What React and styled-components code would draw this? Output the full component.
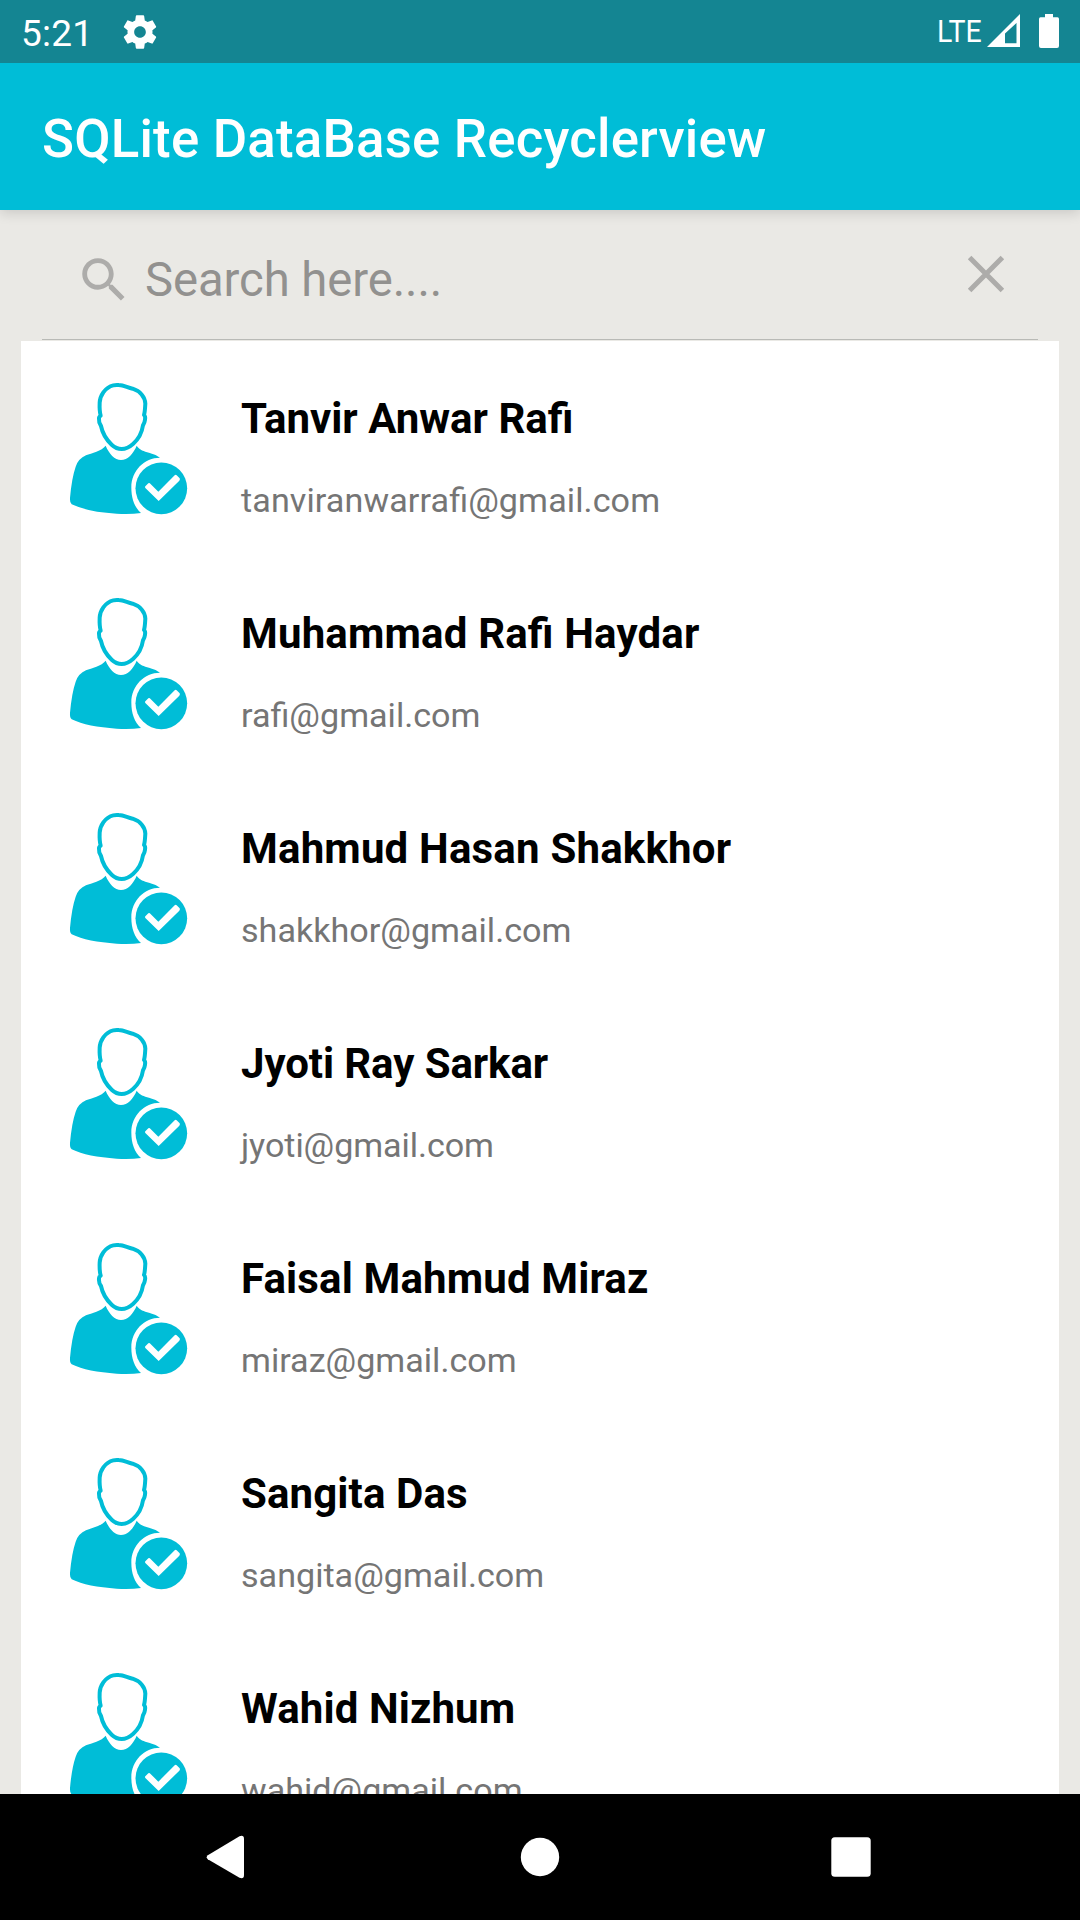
import React from "react";
import styled, { createGlobalStyle } from "styled-components";

const GlobalStyle = createGlobalStyle`
  * { box-sizing: border-box; }
  body { margin: 0; font-family: Roboto, "Liberation Sans", sans-serif; }
`;

const Screen = styled.div`
  display: flex;
  flex-direction: column;
  width: 1080px;
  height: 1920px;
  overflow: hidden;
  background: #eae9e5;
`;

const StatusBar = styled.header`
  position: relative;
  z-index: 1;
  display: flex;
  flex: none;
  justify-content: space-between;
  height: 63px;
  padding: 0 21px;
  background: #148592;
  color: #fff;
`;

const StatusGroup = styled.div`
  display: flex;
  align-items: flex-start;
`;

const Clock = styled.span`
  width: 99px;
  padding-top: 12px;
  font-size: 37px;
  letter-spacing: 0.2px;
  line-height: 43px;
`;

const Network = styled.span`
  width: 50px;
  padding-top: 11px;
  font-size: 32px;
  line-height: 40px;
  transform: scaleX(0.89);
  transform-origin: left;
`;

const Icon = styled.svg`
  display: block;
  flex: none;
  width: ${(p) => p.$w}px;
  height: ${(p) => p.$h}px;
  margin-top: ${(p) => p.$top || 0}px;
  margin-left: ${(p) => p.$left || 0}px;
`;

const Toolbar = styled.div`
  display: flex;
  flex: none;
  align-items: center;
  height: 147px;
  padding: 5px 42px 0;
  background: #00bdd7;
  box-shadow: 0 3px 12px rgba(0, 0, 0, 0.14);
`;

const Title = styled.h1`
  margin: 0;
  color: #fff;
  font-size: 52.8px;
  font-weight: 500;
  letter-spacing: 0.2px;
  line-height: 62px;
  white-space: nowrap;
`;

const SearchBar = styled.div`
  display: flex;
  flex: none;
  height: 130px;
  margin: 0 42px 1px;
  padding: 41px 33px 0 33px;
  border-bottom: 1px solid #b9bab6;
`;

const Hint = styled.span`
  flex: 1;
  margin-left: 12px;
  color: #92918f;
  font-size: 47.25px;
  letter-spacing: -0.08px;
  line-height: 58px;
`;

const List = styled.main`
  flex: 1;
  min-height: 0;
  margin: 0 21px;
  overflow: hidden;
  background: #fff;
`;

const Row = styled.article`
  display: flex;
  height: 215px;
  padding-left: 39px;
`;

const Details = styled.div`
  display: flex;
  flex-direction: column;
  gap: 36px;
  margin-left: 41px;
  padding-top: 53px;
  font-feature-settings: "liga" 1;
  white-space: nowrap;
`;

const Name = styled.strong`
  color: #000;
  font-size: 42px;
  font-weight: 700;
  letter-spacing: ${(p) => p.$tracking || 0}px;
  line-height: 50px;
`;

const Email = styled.span`
  color: #757575;
  font-size: 34.125px;
  letter-spacing: ${(p) => p.$tracking || 0}px;
  line-height: 40px;
`;

const NavBar = styled.nav`
  display: flex;
  flex: none;
  height: 126px;
  padding: 41px 0 0 206px;
  background: #000;
`;

const GearIcon = () => (
  <Icon $w={40} $h={40} $top={12} viewBox="0 0 24 24" fill="#fff">
    <path d="M19.43 12.98c.04-.32.07-.64.07-.98s-.03-.66-.07-.98l2.11-1.65c.19-.15.24-.42.12-.64l-2-3.46c-.12-.22-.39-.3-.61-.22l-2.49 1c-.52-.4-1.08-.73-1.69-.98l-.38-2.65C14.46 2.18 14.25 2 14 2h-4c-.25 0-.46.18-.49.42l-.38 2.65c-.61.25-1.17.59-1.69.98l-2.49-1c-.23-.09-.49 0-.61.22l-2 3.46c-.13.22-.07.49.12.64l2.11 1.65c-.04.32-.07.65-.07.98s.03.66.07.98l-2.11 1.65c-.19.15-.24.42-.12.64l2 3.46c.12.22.39.3.61.22l2.49-1c.52.4 1.08.73 1.69.98l.38 2.65c.03.24.24.42.49.42h4c.25 0 .46-.18.49-.42l.38-2.65c.61-.25 1.17-.59 1.69-.98l2.49 1c.23.09.49 0 .61-.22l2-3.46c.12-.22.07-.49-.12-.64l-2.11-1.65zM12 15.5c-1.93 0-3.5-1.57-3.5-3.5s1.57-3.5 3.5-3.5 3.5 1.57 3.5 3.5-1.57 3.5-3.5 3.5z" />
  </Icon>
);

const SignalIcon = () => (
  <Icon $w={33} $h={33} $top={14} viewBox="0 0 33 33" fill="#fff">
    <path fillRule="evenodd" d="M0 33 33 0V33ZM18 29.3H29.5V9L18 19.5Z" />
  </Icon>
);

const BatteryIcon = () => (
  <Icon $w={20} $h={34} $top={14} $left={19} viewBox="0 0 20 34" fill="#fff">
    <path d="M6 0H14V3.3H18.5Q20 3.3 20 5V32Q20 34 18 34H2Q0 34 0 32V5Q0 3.3 1.5 3.3H6Z" />
  </Icon>
);

const SearchIcon = () => (
  <Icon $w={58} $h={58} viewBox="0 0 24 24" fill="#adacaa">
    <path d="M15.5 14h-.79l-.28-.27C15.41 12.59 16 11.11 16 9.5 16 5.91 13.09 3 9.5 3S3 5.91 3 9.5 5.91 16 9.5 16c1.61 0 3.09-.59 4.23-1.57l.27.28v.79l5 4.99L20.49 19l-4.99-5zm-6 0C7.01 14 5 11.99 5 9.5S7.01 5 9.5 5 14 7.01 14 9.5 11.99 14 9.5 14z" />
  </Icon>
);

const ClearIcon = () => (
  <Icon $w={38} $h={38} $top={4} viewBox="0 0 38 38" stroke="#adacaa" strokeWidth="5">
    <path d="M2.6 2.6 35.4 35.4M35.4 2.6 2.6 35.4" />
  </Icon>
);

const UserIcon = () => (
  <Icon $w={140} $h={150} $top={29} viewBox="0 0 420 450">
    <path
      fill="#00bdd7"
      d="M137 227C147 251 164 270 183 270C203 270 220 251 230 227C239 240 252 244 267 248Q287 253 300 263C253 263 214 302 214 352C214 387 224 412 243 429Q213 433 170 431Q83 426 35 403Q29 398 30 384Q35 325 47 290Q55 266 78 256C95 249 125 243 137 227Z"
    />
    <path
      fill="#fff"
      stroke="#00bdd7"
      strokeWidth="12"
      strokeLinejoin="round"
      d="M176 45C193 46 202 53 218 56C240 63 255 81 256 101C255 115 255 126 252 135Q257 139 255 149Q254 158 249 166C246 187 234 209 219 222Q202 237 185 237Q169 237 155 224C138 208 127 188 123 168Q116 158 117 147Q116 140 122 137Q118 123 119 98C120 77 135 52 160 46Q168 44 176 45Z"
    />
    <circle cx="304" cy="355" r="77.5" fill="#00bdd7" />
    <path fill="#fff" d="M256 349 265 340Q268 338 271 341L295 365 344 316Q347 313 350 316L359 325Q361 328 358 332L296 393 256 354Q254 351 256 349Z" />
  </Icon>
);

const BackIcon = () => (
  <Icon $w={38} $h={44} viewBox="0 0 38 44" fill="#fff">
    <path d="M1.8 20.2 33.5 1.2Q38 -.4 38 4V40Q38 44.4 33.5 42.8L1.8 24.2Q-.4 22.2 1.8 20.2Z" />
  </Icon>
);

const HomeIcon = () => (
  <Icon $w={40} $h={40} $top={2} $left={276} viewBox="0 0 40 40" fill="#fff">
    <circle cx="20" cy="20" r="19.2" />
  </Icon>
);

const RecentsIcon = () => (
  <Icon $w={40} $h={40} $top={2} $left={271} viewBox="0 0 40 40" fill="#fff">
    <rect x=".3" y=".3" width="39.4" height="39.4" rx="3.5" />
  </Icon>
);

const contacts = [
  { name: "Tanvir Anwar Rafi", email: "tanviranwarrafi@gmail.com", emailTracking: 0.1 },
  { name: "Muhammad Rafi Haydar", email: "rafi@gmail.com", nameTracking: 0.17 },
  { name: "Mahmud Hasan Shakkhor", email: "shakkhor@gmail.com", nameTracking: 0.19 },
  { name: "Jyoti Ray Sarkar", email: "jyoti@gmail.com", nameTracking: -0.08, emailTracking: -0.07 },
  { name: "Faisal Mahmud Miraz", email: "miraz@gmail.com", nameTracking: 0.14 },
  { name: "Sangita Das", email: "sangita@gmail.com", nameTracking: 0.12 },
  { name: "Wahid Nizhum", email: "wahid@gmail.com", nameTracking: 0.12 },
];

export default function App() {
  return (
    <>
      <GlobalStyle />
      <Screen>
        <StatusBar>
          <StatusGroup>
            <Clock>5:21</Clock>
            <GearIcon />
          </StatusGroup>
          <StatusGroup>
            <Network>LTE</Network>
            <SignalIcon />
            <BatteryIcon />
          </StatusGroup>
        </StatusBar>
        <Toolbar>
          <Title>SQLite DataBase Recyclerview</Title>
        </Toolbar>
        <SearchBar>
          <SearchIcon />
          <Hint>Search here....</Hint>
          <ClearIcon />
        </SearchBar>
        <List>
          {contacts.map((c) => (
            <Row key={c.email}>
              <UserIcon />
              <Details>
                <Name $tracking={c.nameTracking}>{c.name}</Name>
                <Email $tracking={c.emailTracking}>{c.email}</Email>
              </Details>
            </Row>
          ))}
        </List>
        <NavBar>
          <BackIcon />
          <HomeIcon />
          <RecentsIcon />
        </NavBar>
      </Screen>
    </>
  );
}
